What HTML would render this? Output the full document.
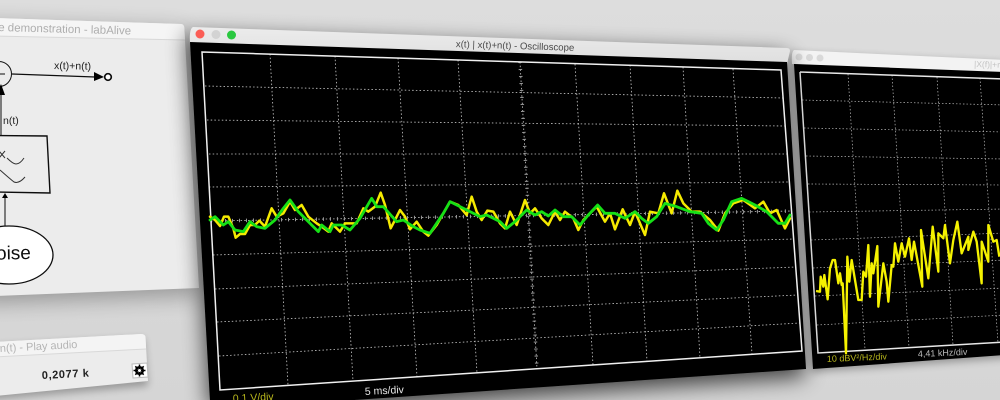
<!DOCTYPE html>
<html><head><meta charset="utf-8"><style>
html,body{margin:0;padding:0;background:#d9d9d9;width:1000px;height:400px;overflow:hidden}
svg{display:block}
text{font-family:"Liberation Sans",sans-serif}
</style></head><body>
<svg width="1000" height="400" viewBox="0 0 1000 400" xmlns="http://www.w3.org/2000/svg">
<defs>
<filter id="s" x="-20%" y="-20%" width="140%" height="140%"><feGaussianBlur stdDeviation="11"/></filter>
<filter id="s2" x="-20%" y="-20%" width="140%" height="140%"><feGaussianBlur stdDeviation="4"/></filter>
<filter id="b" filterUnits="userSpaceOnUse" x="0" y="0" width="1000" height="400"><feGaussianBlur stdDeviation="0.28"/></filter>
<linearGradient id="bg" x1="0" y1="0" x2="0" y2="1"><stop offset="0" stop-color="#dddddd"/><stop offset="1" stop-color="#d5d5d5"/></linearGradient>
<linearGradient id="tb" x1="0" y1="0" x2="0" y2="1"><stop offset="0" stop-color="#ececec"/><stop offset="1" stop-color="#dedede"/></linearGradient>
</defs>
<g filter="url(#b)">
<rect width="1000" height="400" fill="url(#bg)"/>

<!-- left window -->
<polygon points="-20,18 184,24 200,289 -20,297" fill="#000" opacity=".3" filter="url(#s)" transform="translate(0 6)"/>
<path d="M-5,18 L181,24 Q184,24 184.300,28 L199,288 L-5,296Z" fill="#ececec"/>
<path d="M-5,18 L181,24 Q184,24 184.300,28 L185,40 L-5,36Z" fill="#f5f5f5"/>
<path d="M-5,36 L185,40" stroke="#d8d8d8" fill="none"/>
<text x="131" y="34.500" font-size="11.500" fill="#aeaeae" text-anchor="end" transform="rotate(1.500 131 34.500)">Noise demonstration - labAlive</text>
<g stroke="#111" fill="none">
<circle cx="-1" cy="74" r="12.500" stroke-width="1"/>
<path d="M0,74H5" stroke-width="1"/>
<path d="M12,74L95,77" stroke-width="1.300"/>
<path d="M1,92V135" stroke-width="1"/>
<path d="M-5,135.500L47,136L50,193L-5,192" stroke-width="1.400"/>
<path d="M5,197V226" stroke-width="1"/>
<path d="M-1,151L5,158M5,151L-1,158M7,158Q13,164 16,164Q20,164 24,158M0,170Q9,178 14,182Q19,184 25,177" stroke-width="1" stroke="#333"/>
<ellipse cx="9" cy="255" rx="44" ry="29" fill="#fff" stroke-width="1.300"/>
<circle cx="108" cy="77" r="3.300" stroke-width="1.700" fill="#fff"/>
</g>
<path d="M94,72L104,77L94,81Z" fill="#000"/>
<path d="M1,84L5,95H-4Z" fill="#000"/>
<path d="M5,193L8,198H2Z" fill="#000"/>
<text x="54" y="69" font-size="10.500" fill="#222" transform="rotate(1 54 69)">x(t)+n(t)</text>
<text x="3" y="124" font-size="10.500" fill="#222">n(t)</text>
<text x="31" y="259" font-size="19" fill="#111" text-anchor="end" transform="rotate(-1 31 259)">Noise</text>

<!-- play window -->
<polygon points="-10,342 144,334 148,382 -10,396" fill="#000" opacity=".28" filter="url(#s2)" transform="translate(0 4)"/>
<path d="M-5,342 L141,334 Q145,334 145.500,337 L148,381 L-5,396Z" fill="#ececec"/>
<path d="M-5,342 L141,334 Q145,334 145.500,337 L146,349 L-5,357Z" fill="#f4f4f4"/>
<path d="M-5,357 L146,349" stroke="#d9d9d9" fill="none"/>
<text x="0" y="352" font-size="11" fill="#b4b4b4" transform="rotate(-3 0 352)">n(t) - Play audio</text>
<text x="42" y="379" font-size="11" font-weight="bold" fill="#222" transform="rotate(-3 42 379)" textLength="47">0,2077 k</text>
<polygon points="132,364 147,363 148,377 133,378" fill="#fff" stroke="#bbb"/>
<g transform="translate(139.500 370.500)">
<circle r="3.600" fill="none" stroke="#000" stroke-width="1.900"/>
<path d="M0,-6V6M-6,0H6M-4.200,-4.200L4.200,4.200M4.200,-4.200L-4.200,4.200" stroke="#000" stroke-width="1.500"/>
<circle r="1.500" fill="#fff"/>
</g>

<!-- right window -->
<polygon points="791,50 1010,60 1010,355 812,369" fill="#000" opacity=".3" filter="url(#s2)" transform="translate(0 3)"/>
<path d="M794,50 L1005,60 V74 L792,64 Q791,52 794,50Z" fill="#f3f3f3"/>
<polygon points="794,64 1005,72 1005,355 813,369" fill="#000"/>
<circle cx="799" cy="57" r="3.500" fill="#d9d9d9"/><circle cx="809.500" cy="57.500" r="3.500" fill="#d9d9d9"/><circle cx="820" cy="58" r="3.500" fill="#d9d9d9"/>
<text x="974" y="67" font-size="8.500" fill="#c4c4c4" transform="rotate(1.500 974 67)">|X(f)|+n(t)</text>
<g stroke="#bbb" stroke-width=".7" stroke-dasharray="1.500 2" fill="none">
<path d="M848,74L865,349M892,75L909,347M937,77L953,345M980,78L998,343"/>
<path d="M802,100L1005,105M804,128L1005,132M806,156L1005,159M808,184L1005,185M809,212L1005,209M811,240L1005,233M813,268L1005,260M815,296L1005,288M817,325L1005,315"/>
</g>
<path d="M800,72L1005,79M800,72L818,353L1005,342" fill="none" stroke="#e8e8e8" stroke-width="1.500"/>
<g transform="translate(790 210) scale(.33333)">
<polyline fill="none" stroke="#f5f200" stroke-width="7" stroke-linejoin="round" points="78,243 90,245 92,200 100,230 103,195 113,268 120,175 128,150 135,150 145,220 150,190 155,225 158,220 168,430 172,140 178,215 185,150 205,270 215,270 220,185 228,200 235,105 240,260 245,160 250,190 262,108 265,290 280,160 290,215 295,275 305,165 310,170 315,100 325,155 335,100 345,140 357,85 365,150 372,95 385,165 397,230 393,60 415,205 428,50 445,185 445,70 460,85 465,45 480,160 490,90 502,35 515,130 535,80 535,120 550,65 560,95 575,220 575,95 595,155 595,45 610,95 620,90 628,140"/>
</g>
<text x="827" y="362" font-size="9" fill="#b9b81e" transform="rotate(-2.500 827 362)">10 dBV²/Hz/div</text>
<text x="918" y="357" font-size="9" fill="#bdbdbd" transform="rotate(-2.500 918 357)">4,41 kHz/div</text>

<!-- main window -->
<polygon points="190,28 790,48 808,370 340,402 212,402" fill="#000" opacity=".7" filter="url(#s)" transform="translate(-3 7)"/>
<path d="M193,27 L787,48 Q790,48 790,51 L787,64 L190,43 Q189,29 193,27Z" fill="url(#tb)"/>
<polygon points="190,42 787,62 806,369 340,401 210,401" fill="#000"/>
<circle cx="200" cy="34" r="4.500" fill="#fb5d56"/><circle cx="216" cy="34.500" r="4.500" fill="#d3d3d3"/><circle cx="231.500" cy="35" r="4.500" fill="#2ac840"/>
<text x="515" y="49" font-size="9.600" fill="#4a4a4a" text-anchor="middle" transform="rotate(1.800 515 49)">x(t) | x(t)+n(t) - Oscilloscope</text>
<g stroke="#ccc" stroke-width=".8" stroke-dasharray="1.500 2.200" fill="none">
<path d="M270,54L288,385M335,56L353,381M398,58L417,377M458,60L477,373M520,62L537,369M575,64L593,365M630,65L647,361M683,67L700,358M733,69L752,354"/>
<path d="M205,86L783,98M207,120L785,126M209,154L787,154M209,187L789,182M211,221L792,211M213,255L794,239M215,289L796,267M217,322L798,295M219,356L800,323"/>
</g>
<g stroke="#999" stroke-width="3.500" stroke-dasharray="1 6" fill="none">
<path d="M520,62L537,369M211,221L792,211"/>
</g>
<path d="M202,52L781,70L802,351L220,390Z" fill="none" stroke="#f0f0f0" stroke-width="1.500"/>
<g transform="translate(200 170) scale(.33333)" fill="none" stroke-linejoin="round" stroke-linecap="round">
<polyline stroke="#f5ea00" stroke-width="7.500" points="30,140 45,150 60,168 72,140 85,140 100,175 107,203 120,192 135,192 150,165 165,165 178,152 195,170 215,115 230,140 250,130 270,95 285,120 305,105 325,140 350,160 365,170 385,185 395,160 420,185 435,160 470,160 490,115 505,125 525,110 542,68 555,105 572,175 585,150 600,120 615,140 630,178 650,155 670,185 685,197 710,165 730,130 750,95 775,105 800,135 815,80 830,125 845,150 862,122 880,125 900,160 915,175 930,125 950,165 975,90 990,130 1005,115 1025,145 1045,165 1065,125 1080,150 1095,125 1120,145 1135,180 1150,150 1190,110 1215,155 1230,130 1245,178 1268,118 1290,165 1305,125 1335,195 1350,125 1375,130 1392,70 1415,130 1432,62 1450,100 1475,125 1500,125 1530,150 1555,182 1575,130 1600,100 1630,90 1665,115 1690,95 1710,130 1730,120 1755,175 1770,145"/>
<polyline stroke="#14e014" stroke-width="8.500" points="30,150 45,140 70,165 85,155 105,180 130,185 150,155 170,170 195,175 225,150 250,115 270,90 295,125 320,150 355,185 365,165 390,185 400,165 425,165 450,180 480,145 515,85 530,110 550,110 590,155 610,150 640,170 660,180 690,190 730,130 750,95 780,110 810,125 840,140 860,135 900,155 920,175 945,155 980,120 1005,135 1025,125 1045,138 1065,120 1090,140 1115,140 1140,165 1165,135 1193,105 1215,130 1245,130 1275,145 1305,125 1325,145 1345,160 1370,140 1395,100 1430,110 1470,125 1505,130 1525,160 1550,180 1570,150 1595,95 1625,85 1645,95 1665,105 1700,125 1735,160 1755,160 1770,135"/>
</g>
<text x="365" y="395" font-size="10.500" fill="#e8e8e8" transform="rotate(-3 365 395)">5 ms/div</text>
<text x="233" y="402" font-size="10.500" fill="#b9b81e" transform="rotate(-3 233 402)">0,1 V/div</text>
</g>
</svg>
</body></html>
